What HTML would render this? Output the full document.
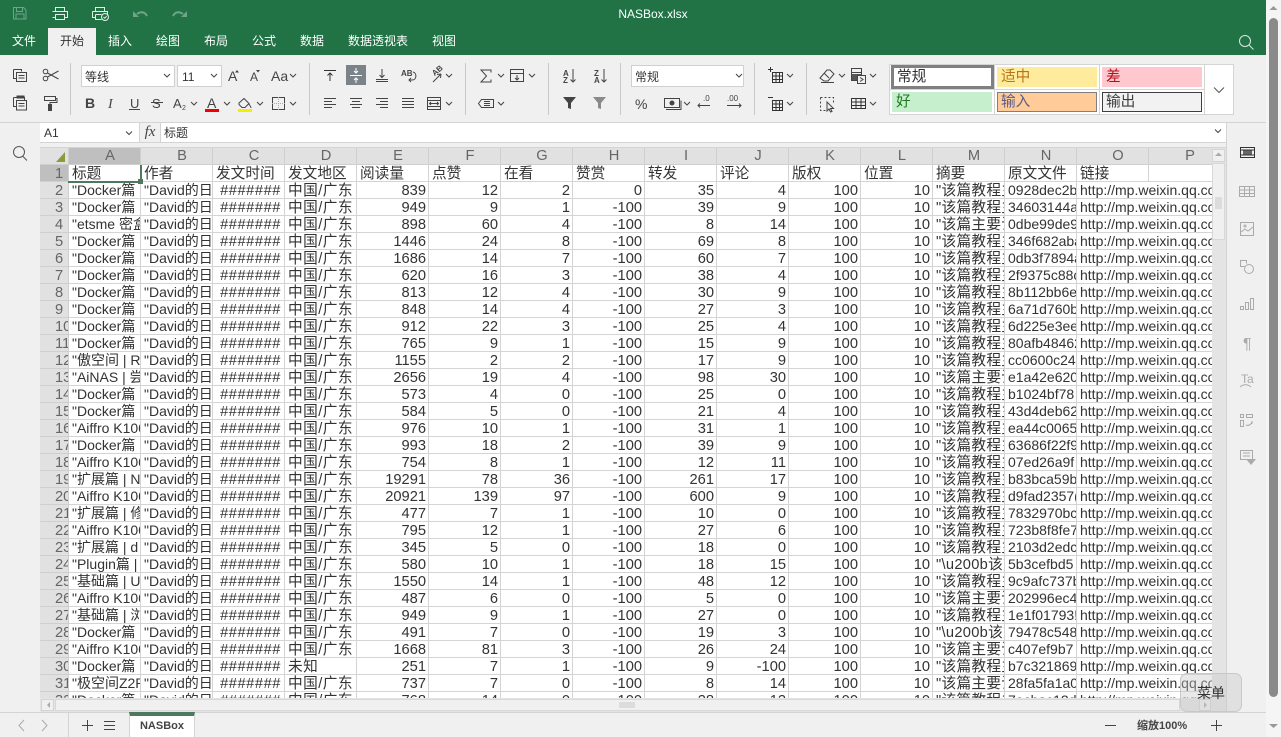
<!DOCTYPE html>
<html><head><meta charset="utf-8"><title>NASBox.xlsx</title>
<style>
html,body{margin:0;padding:0;width:1281px;height:737px;overflow:hidden;background:#f0f0f0;font-family:"Liberation Sans","WenQuanYi Zen Hei","Noto Sans CJK SC",sans-serif;color:#333}
.a{position:absolute;box-sizing:border-box;white-space:nowrap}
.m{color:#fff;font-size:12px;top:33px;line-height:16px}
#g{position:absolute;left:40px;top:148px;width:1172px;height:550px;overflow:hidden;background:#fff}
table{border-collapse:separate;border-spacing:0;table-layout:fixed;width:1181px}
td,th{box-sizing:border-box;height:17px;padding:2px 0 0 3px;border-right:1px solid #d4d4d4;border-bottom:1px solid #d4d4d4;overflow:hidden;white-space:nowrap;font-size:14.67px;line-height:14px;font-weight:400;color:#333;text-align:left;vertical-align:top}
thead th{background:#e1e1e1;color:#666;text-align:center;padding:0 0 0 11px;line-height:16px;border-color:#cfcfcf}
tbody th{background:#e1e1e1;color:#666;padding-left:15px;border-color:#cfcfcf}
td.r{text-align:right;padding:2px 2px 0 0}
td.h{text-align:right;padding:2px 3px 0 0;letter-spacing:.55px}
tbody tr:not(:first-child) td:nth-child(5){letter-spacing:.45px}
tbody tr:not(:first-child) td:nth-child(2),tbody tr:not(:first-child) td:nth-child(3),tbody tr:not(:first-child) td:nth-child(15),tbody tr:not(:first-child) td:nth-child(16){font-size:14px;padding-top:1px;padding-bottom:1px}
tbody tr:not(:first-child) td:nth-child(14){letter-spacing:.3px}
.s{position:absolute;box-sizing:border-box;font-size:14.67px;line-height:20px;padding-left:5px}
</style></head><body>
<div class="a" style="left:0;top:0;width:1266px;height:55px;background:#217346"></div>
<div class="a" style="left:1266px;top:0;width:15px;height:737px;background:#f5f5f5"></div>
<div class="a" style="left:1269px;top:18px;width:9px;height:679px;background:#8a8a8a;border-radius:5px"></div>
<div class="a" style="left:0;top:6px;width:1266px;text-align:center;color:#fff;font-size:12px;line-height:16px;padding-left:40px">NASBox.xlsx</div>
<div class="a" style="left:48px;top:28px;width:48px;height:27px;background:#f0f0f0"></div>
<div class="a m" style="left:12px">文件</div>
<div class="a m" style="left:60px;color:#333">开始</div>
<div class="a m" style="left:108px">插入</div>
<div class="a m" style="left:156px">绘图</div>
<div class="a m" style="left:204px">布局</div>
<div class="a m" style="left:252px">公式</div>
<div class="a m" style="left:300px">数据</div>
<div class="a m" style="left:348px">数据透视表</div>
<div class="a m" style="left:432px">视图</div>

<div class="a" style="left:0;top:122px;width:1266px;height:1px;background:#d4d4d4"></div>
<div class="a" style="left:70px;top:63px;width:1px;height:52px;background:#c8c8c8"></div>
<div class="a" style="left:309px;top:63px;width:1px;height:52px;background:#c8c8c8"></div>
<div class="a" style="left:465px;top:63px;width:1px;height:52px;background:#c8c8c8"></div>
<div class="a" style="left:548px;top:63px;width:1px;height:52px;background:#c8c8c8"></div>
<div class="a" style="left:620px;top:63px;width:1px;height:52px;background:#c8c8c8"></div>
<div class="a" style="left:754px;top:63px;width:1px;height:52px;background:#c8c8c8"></div>
<div class="a" style="left:806px;top:63px;width:1px;height:52px;background:#c8c8c8"></div>

<div class="a" style="left:81px;top:65px;width:94px;height:22px;background:#fff;border:1px solid #d0d0d0;font-size:12px;line-height:22px;padding-left:3px">等线</div>
<div class="a" style="left:177px;top:65px;width:45px;height:22px;background:#fff;border:1px solid #d0d0d0;font-size:12px;line-height:22px;padding-left:4px">11</div>
<div class="a" style="left:631px;top:65px;width:113px;height:22px;background:#fff;border:1px solid #d0d0d0;font-size:12px;line-height:22px;padding-left:3px">常规</div>
<div class="a" style="left:346px;top:65px;width:20px;height:20px;background:#7b8389"></div>

<div class="a" style="left:889px;top:64px;width:345px;height:51px;background:#fff;border:1px solid #d4d4d4"></div>
<div class="a" style="left:994px;top:65px;width:1px;height:49px;background:#d4d4d4"></div>
<div class="a" style="left:1099px;top:65px;width:1px;height:49px;background:#d4d4d4"></div>
<div class="a" style="left:1204px;top:65px;width:1px;height:49px;background:#d4d4d4"></div>
<div class="a" style="left:890px;top:89px;width:314px;height:1px;background:#d4d4d4"></div>
<div class="s" style="left:891px;top:65px;width:103px;height:24px;background:#fff;border:3px solid #808080;color:#333;line-height:19px;padding-left:3px">常规</div>
<div class="s" style="left:997px;top:67px;width:100px;height:20px;background:#ffeb9c;color:#b8741a;padding-left:4px">适中</div>
<div class="s" style="left:1102px;top:67px;width:100px;height:20px;background:#ffc7ce;color:#b3101a;padding-left:4px">差</div>
<div class="s" style="left:892px;top:92px;width:100px;height:20px;background:#c6efce;color:#1f7a1f;padding-left:4px">好</div>
<div class="s" style="left:997px;top:92px;width:100px;height:20px;background:#ffcc99;border:1px solid #7f7f7f;color:#5c5c8a;padding-left:3px;line-height:19px">输入</div>
<div class="s" style="left:1102px;top:92px;width:100px;height:20px;background:#f2f2f2;border:1px solid #3f3f3f;color:#3f3f3f;padding-left:3px;line-height:19px">输出</div>

<div class="a" style="left:40px;top:123px;width:1186px;height:20px;background:#fff;border-bottom:1px solid #d4d4d4"></div>
<div class="a" style="left:139px;top:123px;width:22px;height:19px;background:#f0f0f0;border-left:1px solid #d4d4d4;border-right:1px solid #d4d4d4;font:italic 15px/18px 'Liberation Serif',serif;text-align:center;color:#444">fx</div>
<div class="a" style="left:44px;top:124px;font-size:12px;line-height:18px">A1</div>
<div class="a" style="left:164px;top:124px;font-size:12px;line-height:18px">标题</div>
<div class="a" style="left:1226px;top:123px;width:1px;height:589px;background:#d4d4d4"></div>
<div class="a" style="left:40px;top:143px;width:1186px;height:5px;background:#f0f0f0;border-bottom:1px solid #d4d4d4"></div>

<div id="g"><table>
<colgroup><col style="width:29px"><col span="16" style="width:72px"></colgroup>
<thead><tr><th></th><th style="background:#bfbfbf">A</th><th>B</th><th>C</th><th>D</th><th>E</th><th>F</th><th>G</th><th>H</th><th>I</th><th>J</th><th>K</th><th>L</th><th>M</th><th>N</th><th>O</th><th>P</th></tr></thead>
<tbody>
<tr><th style="background:#bfbfbf">1</th><td>标题</td><td>作者</td><td>发文时间</td><td>发文地区</td><td>阅读量</td><td>点赞</td><td>在看</td><td>赞赏</td><td>转发</td><td>评论</td><td>版权</td><td>位置</td><td>摘要</td><td>原文文件</td><td>链接</td><td></td></tr>
<tr><th>2</th><td>"Docker篇 |</td><td>"David的日</td><td class="h">#######</td><td>中国/广东</td><td class="r">839</td><td class="r">12</td><td class="r">2</td><td class="r">0</td><td class="r">35</td><td class="r">4</td><td class="r">100</td><td class="r">10</td><td>"该篇教程主</td><td>0928dec2b</td><td colspan="2">http://mp.weixin.qq.com/s</td></tr>
<tr><th>3</th><td>"Docker篇 |</td><td>"David的日</td><td class="h">#######</td><td>中国/广东</td><td class="r">949</td><td class="r">9</td><td class="r">1</td><td class="r">-100</td><td class="r">39</td><td class="r">9</td><td class="r">100</td><td class="r">10</td><td>"该篇教程主</td><td>34603144a</td><td colspan="2">http://mp.weixin.qq.com/s</td></tr>
<tr><th>4</th><td>"etsme 密盒</td><td>"David的日</td><td class="h">#######</td><td>中国/广东</td><td class="r">898</td><td class="r">60</td><td class="r">4</td><td class="r">-100</td><td class="r">8</td><td class="r">14</td><td class="r">100</td><td class="r">10</td><td>"该篇主要讲</td><td>0dbe99de9</td><td colspan="2">http://mp.weixin.qq.com/s</td></tr>
<tr><th>5</th><td>"Docker篇 |</td><td>"David的日</td><td class="h">#######</td><td>中国/广东</td><td class="r">1446</td><td class="r">24</td><td class="r">8</td><td class="r">-100</td><td class="r">69</td><td class="r">8</td><td class="r">100</td><td class="r">10</td><td>"该篇教程主</td><td>346f682aba</td><td colspan="2">http://mp.weixin.qq.com/s</td></tr>
<tr><th>6</th><td>"Docker篇 |</td><td>"David的日</td><td class="h">#######</td><td>中国/广东</td><td class="r">1686</td><td class="r">14</td><td class="r">7</td><td class="r">-100</td><td class="r">60</td><td class="r">7</td><td class="r">100</td><td class="r">10</td><td>"该篇教程主</td><td>0db3f7894a</td><td colspan="2">http://mp.weixin.qq.com/s</td></tr>
<tr><th>7</th><td>"Docker篇 |</td><td>"David的日</td><td class="h">#######</td><td>中国/广东</td><td class="r">620</td><td class="r">16</td><td class="r">3</td><td class="r">-100</td><td class="r">38</td><td class="r">4</td><td class="r">100</td><td class="r">10</td><td>"该篇教程主</td><td>2f9375c88c</td><td colspan="2">http://mp.weixin.qq.com/s</td></tr>
<tr><th>8</th><td>"Docker篇 |</td><td>"David的日</td><td class="h">#######</td><td>中国/广东</td><td class="r">813</td><td class="r">12</td><td class="r">4</td><td class="r">-100</td><td class="r">30</td><td class="r">9</td><td class="r">100</td><td class="r">10</td><td>"该篇教程主</td><td>8b112bb6e</td><td colspan="2">http://mp.weixin.qq.com/s</td></tr>
<tr><th>9</th><td>"Docker篇 |</td><td>"David的日</td><td class="h">#######</td><td>中国/广东</td><td class="r">848</td><td class="r">14</td><td class="r">4</td><td class="r">-100</td><td class="r">27</td><td class="r">3</td><td class="r">100</td><td class="r">10</td><td>"该篇教程主</td><td>6a71d760b</td><td colspan="2">http://mp.weixin.qq.com/s</td></tr>
<tr><th>10</th><td>"Docker篇 |</td><td>"David的日</td><td class="h">#######</td><td>中国/广东</td><td class="r">912</td><td class="r">22</td><td class="r">3</td><td class="r">-100</td><td class="r">25</td><td class="r">4</td><td class="r">100</td><td class="r">10</td><td>"该篇教程主</td><td>6d225e3ee</td><td colspan="2">http://mp.weixin.qq.com/s</td></tr>
<tr><th>11</th><td>"Docker篇 |</td><td>"David的日</td><td class="h">#######</td><td>中国/广东</td><td class="r">765</td><td class="r">9</td><td class="r">1</td><td class="r">-100</td><td class="r">15</td><td class="r">9</td><td class="r">100</td><td class="r">10</td><td>"该篇教程主</td><td>80afb48462</td><td colspan="2">http://mp.weixin.qq.com/s</td></tr>
<tr><th>12</th><td>"傲空间 | R</td><td>"David的日</td><td class="h">#######</td><td>中国/广东</td><td class="r">1155</td><td class="r">2</td><td class="r">2</td><td class="r">-100</td><td class="r">17</td><td class="r">9</td><td class="r">100</td><td class="r">10</td><td>"该篇教程主</td><td>cc0600c24</td><td colspan="2">http://mp.weixin.qq.com/s</td></tr>
<tr><th>13</th><td>"AiNAS | 尝</td><td>"David的日</td><td class="h">#######</td><td>中国/广东</td><td class="r">2656</td><td class="r">19</td><td class="r">4</td><td class="r">-100</td><td class="r">98</td><td class="r">30</td><td class="r">100</td><td class="r">10</td><td>"该篇主要讲</td><td>e1a42e620</td><td colspan="2">http://mp.weixin.qq.com/s</td></tr>
<tr><th>14</th><td>"Docker篇 |</td><td>"David的日</td><td class="h">#######</td><td>中国/广东</td><td class="r">573</td><td class="r">4</td><td class="r">0</td><td class="r">-100</td><td class="r">25</td><td class="r">0</td><td class="r">100</td><td class="r">10</td><td>"该篇教程主</td><td>b1024bf78</td><td colspan="2">http://mp.weixin.qq.com/s</td></tr>
<tr><th>15</th><td>"Docker篇 |</td><td>"David的日</td><td class="h">#######</td><td>中国/广东</td><td class="r">584</td><td class="r">5</td><td class="r">0</td><td class="r">-100</td><td class="r">21</td><td class="r">4</td><td class="r">100</td><td class="r">10</td><td>"该篇教程主</td><td>43d4deb62</td><td colspan="2">http://mp.weixin.qq.com/s</td></tr>
<tr><th>16</th><td>"Aiffro K100</td><td>"David的日</td><td class="h">#######</td><td>中国/广东</td><td class="r">976</td><td class="r">10</td><td class="r">1</td><td class="r">-100</td><td class="r">31</td><td class="r">1</td><td class="r">100</td><td class="r">10</td><td>"该篇教程主</td><td>ea44c0065</td><td colspan="2">http://mp.weixin.qq.com/s</td></tr>
<tr><th>17</th><td>"Docker篇 |</td><td>"David的日</td><td class="h">#######</td><td>中国/广东</td><td class="r">993</td><td class="r">18</td><td class="r">2</td><td class="r">-100</td><td class="r">39</td><td class="r">9</td><td class="r">100</td><td class="r">10</td><td>"该篇教程主</td><td>63686f22f9</td><td colspan="2">http://mp.weixin.qq.com/s</td></tr>
<tr><th>18</th><td>"Aiffro K100</td><td>"David的日</td><td class="h">#######</td><td>中国/广东</td><td class="r">754</td><td class="r">8</td><td class="r">1</td><td class="r">-100</td><td class="r">12</td><td class="r">11</td><td class="r">100</td><td class="r">10</td><td>"该篇教程主</td><td>07ed26a9f</td><td colspan="2">http://mp.weixin.qq.com/s</td></tr>
<tr><th>19</th><td>"扩展篇 | N</td><td>"David的日</td><td class="h">#######</td><td>中国/广东</td><td class="r">19291</td><td class="r">78</td><td class="r">36</td><td class="r">-100</td><td class="r">261</td><td class="r">17</td><td class="r">100</td><td class="r">10</td><td>"该篇教程主</td><td>b83bca59b</td><td colspan="2">http://mp.weixin.qq.com/s</td></tr>
<tr><th>20</th><td>"Aiffro K100</td><td>"David的日</td><td class="h">#######</td><td>中国/广东</td><td class="r">20921</td><td class="r">139</td><td class="r">97</td><td class="r">-100</td><td class="r">600</td><td class="r">9</td><td class="r">100</td><td class="r">10</td><td>"该篇教程主</td><td>d9fad2357(</td><td colspan="2">http://mp.weixin.qq.com/s</td></tr>
<tr><th>21</th><td>"扩展篇 | 修</td><td>"David的日</td><td class="h">#######</td><td>中国/广东</td><td class="r">477</td><td class="r">7</td><td class="r">1</td><td class="r">-100</td><td class="r">10</td><td class="r">0</td><td class="r">100</td><td class="r">10</td><td>"该篇教程主</td><td>7832970bc</td><td colspan="2">http://mp.weixin.qq.com/s</td></tr>
<tr><th>22</th><td>"Aiffro K100</td><td>"David的日</td><td class="h">#######</td><td>中国/广东</td><td class="r">795</td><td class="r">12</td><td class="r">1</td><td class="r">-100</td><td class="r">27</td><td class="r">6</td><td class="r">100</td><td class="r">10</td><td>"该篇教程主</td><td>723b8f8fe7</td><td colspan="2">http://mp.weixin.qq.com/s</td></tr>
<tr><th>23</th><td>"扩展篇 | d</td><td>"David的日</td><td class="h">#######</td><td>中国/广东</td><td class="r">345</td><td class="r">5</td><td class="r">0</td><td class="r">-100</td><td class="r">18</td><td class="r">0</td><td class="r">100</td><td class="r">10</td><td>"该篇教程主</td><td>2103d2edc</td><td colspan="2">http://mp.weixin.qq.com/s</td></tr>
<tr><th>24</th><td>"Plugin篇 |</td><td>"David的日</td><td class="h">#######</td><td>中国/广东</td><td class="r">580</td><td class="r">10</td><td class="r">1</td><td class="r">-100</td><td class="r">18</td><td class="r">15</td><td class="r">100</td><td class="r">10</td><td>"\u200b该篇</td><td>5b3cefbd5</td><td colspan="2">http://mp.weixin.qq.com/s</td></tr>
<tr><th>25</th><td>"基础篇 | U</td><td>"David的日</td><td class="h">#######</td><td>中国/广东</td><td class="r">1550</td><td class="r">14</td><td class="r">1</td><td class="r">-100</td><td class="r">48</td><td class="r">12</td><td class="r">100</td><td class="r">10</td><td>"该篇教程主</td><td>9c9afc737b</td><td colspan="2">http://mp.weixin.qq.com/s</td></tr>
<tr><th>26</th><td>"Aiffro K100</td><td>"David的日</td><td class="h">#######</td><td>中国/广东</td><td class="r">487</td><td class="r">6</td><td class="r">0</td><td class="r">-100</td><td class="r">5</td><td class="r">0</td><td class="r">100</td><td class="r">10</td><td>"该篇主要讲</td><td>202996ec4</td><td colspan="2">http://mp.weixin.qq.com/s</td></tr>
<tr><th>27</th><td>"基础篇 | 浏</td><td>"David的日</td><td class="h">#######</td><td>中国/广东</td><td class="r">949</td><td class="r">9</td><td class="r">1</td><td class="r">-100</td><td class="r">27</td><td class="r">0</td><td class="r">100</td><td class="r">10</td><td>"该篇教程主</td><td>1e1f01793!</td><td colspan="2">http://mp.weixin.qq.com/s</td></tr>
<tr><th>28</th><td>"Docker篇 |</td><td>"David的日</td><td class="h">#######</td><td>中国/广东</td><td class="r">491</td><td class="r">7</td><td class="r">0</td><td class="r">-100</td><td class="r">19</td><td class="r">3</td><td class="r">100</td><td class="r">10</td><td>"\u200b该篇</td><td>79478c548</td><td colspan="2">http://mp.weixin.qq.com/s</td></tr>
<tr><th>29</th><td>"Aiffro K100</td><td>"David的日</td><td class="h">#######</td><td>中国/广东</td><td class="r">1668</td><td class="r">81</td><td class="r">3</td><td class="r">-100</td><td class="r">26</td><td class="r">24</td><td class="r">100</td><td class="r">10</td><td>"该篇主要讲</td><td>c407ef9b7</td><td colspan="2">http://mp.weixin.qq.com/s</td></tr>
<tr><th>30</th><td>"Docker篇 |</td><td>"David的日</td><td class="h">#######</td><td>未知</td><td class="r">251</td><td class="r">7</td><td class="r">1</td><td class="r">-100</td><td class="r">9</td><td class="r">-100</td><td class="r">100</td><td class="r">10</td><td>"该篇教程主</td><td>b7c321869</td><td colspan="2">http://mp.weixin.qq.com/s</td></tr>
<tr><th>31</th><td>"极空间Z2P</td><td>"David的日</td><td class="h">#######</td><td>中国/广东</td><td class="r">737</td><td class="r">7</td><td class="r">0</td><td class="r">-100</td><td class="r">8</td><td class="r">14</td><td class="r">100</td><td class="r">10</td><td>"该篇主要讲</td><td>28fa5fa1a0</td><td colspan="2">http://mp.weixin.qq.com/s</td></tr>
<tr><th>32</th><td>"Docker篇 |</td><td>"David的日</td><td class="h">#######</td><td>中国/广东</td><td class="r">768</td><td class="r">14</td><td class="r">0</td><td class="r">-100</td><td class="r">28</td><td class="r">12</td><td class="r">100</td><td class="r">10</td><td>"该篇教程主</td><td>7ecbac12d</td><td colspan="2">http://mp.weixin.qq.com/s</td></tr>
</tbody></table></div>

<div class="a" style="left:68px;top:181px;width:72px;height:2px;background:#4d7a5e"></div>
<div class="a" style="left:140px;top:165px;width:2px;height:15px;background:#4d7a5e"></div>
<div class="a" style="left:138px;top:179px;width:5px;height:5px;background:#4d7a5e"></div>

<div class="a" style="left:1212px;top:148px;width:14px;height:564px;background:#e4e4e4"></div>
<div class="a" style="left:1212px;top:149px;width:13px;height:13px;background:#f0f0f0;border:1px solid #d4d4d4"></div>
<div class="a" style="left:1212px;top:163px;width:13px;height:77px;background:#f0f0f0;border:1px solid #d8d8d8"></div>
<div class="a" style="left:40px;top:698px;width:1172px;height:14px;background:#e4e4e4"></div>
<div class="a" style="left:41px;top:699px;width:13px;height:12px;background:#f0f0f0;border:1px solid #d4d4d4"></div>
<div class="a" style="left:55px;top:699px;width:1125px;height:12px;background:#f0f0f0;border:1px solid #d8d8d8"></div>
<div class="a" style="left:1199px;top:699px;width:12px;height:12px;background:#f0f0f0;border:1px solid #d4d4d4"></div>
<div class="a" style="left:0;top:712px;width:1266px;height:25px;background:#f0f0f0;border-top:1px solid #d4d4d4"></div>
<div class="a" style="left:68px;top:712px;width:1px;height:25px;background:#d4d4d4"></div>
<div class="a" style="left:129px;top:712px;width:66px;height:25px;background:#fff;border-top:4px solid #4d7a5e;border-right:1px solid #d4d4d4;border-left:1px solid #d4d4d4;font-size:11px;font-weight:700;text-align:center;line-height:20px;color:#444">NASBox</div>
<div class="a" style="left:1137px;top:717px;font-size:11px;font-weight:700;line-height:18px;color:#444">缩放100%</div>

<svg class="a" style="left:0;top:0" width="1281" height="737" viewBox="0 0 1281 737" fill="none" stroke="#444" stroke-width="1">
<defs><path id="c" d="M-3-1.500 0 1.500 3-1.500"/></defs>
<g stroke="#6fa488"><path d="M13.500 7.500h10l2.500 2.500v9h-12.500zM16.500 7.500v4h6v-4M16 19v-5h8v5"/><path d="M137 14c4-3 8-2 10 2M173 16c2-4 6-5 10-2" stroke-width="2"/><path d="M133 11v6h6zM187 11v6h-6z" fill="#6fa488" stroke="none"/></g>
<g stroke="#e4efe9"><path d="M55.500 11.500v-4h9v4M52.500 11.500h15v6h-3M55.500 17.500h-3M55.500 14.500h9v5h-9z"/><path d="M95.500 11.500v-4h9v4M92.500 11.500h15v4M92.500 11.500v6h3M95.500 14.500h6M95.500 14.500v5h6"/><circle cx="105" cy="17" r="3.500"/><path d="M103.500 17l1.200 1.200 2-2"/></g>
<circle cx="1245" cy="41" r="5.500" stroke="#d8e8df"/><path d="M1249 45l4.500 4.500" stroke="#d8e8df"/>

<path d="M13.500 69.500h8v2M16.500 72.500h10v9h-10zM13.500 69.500v9h3M18.500 75.500h6M18.500 78h6"/>
<circle cx="45.500" cy="71.500" r="2.300"/><circle cx="45.500" cy="78.500" r="2.300"/><path d="M47.500 73l11 6M47.500 77l11-6"/>
<path d="M13.500 97.500h11v3M16.500 100.500h10v9.500h-10zM13.500 97.500v9h3M18.500 103.500h6M18.500 106h6"/><path d="M17 96h7v2h-7z" fill="#444"/>
<path d="M44.500 96.500h11v4h-11zM55.500 98.500h1.500v4h-7v2"/><path d="M48.500 104.500h3v6h-3z" fill="#444"/>

<use href="#c" x="167" y="75.500"/><use href="#c" x="214" y="75.500"/><use href="#c" x="293" y="75.500"/>
<use href="#c" x="194" y="103.500"/><use href="#c" x="227" y="103.500"/><use href="#c" x="260" y="103.500"/><use href="#c" x="293" y="103.500"/>
<use href="#c" x="449" y="75.500"/><use href="#c" x="449" y="103.500"/><use href="#c" x="501" y="75.500"/><use href="#c" x="532" y="75.500"/><use href="#c" x="501" y="103.500"/>
<use href="#c" x="739" y="75.500"/><use href="#c" x="687" y="103.500"/><use href="#c" x="790" y="75.500"/><use href="#c" x="790" y="103.500"/>
<use href="#c" x="842" y="75.500"/><use href="#c" x="873" y="75.500"/><use href="#c" x="873" y="103.500"/><use href="#c" x="129" y="133"/><use href="#c" x="1218" y="131"/>

<g fill="#444" stroke="none" font-family="Liberation Sans,sans-serif">
<text x="228" y="81" font-size="14">A</text><text x="250" y="81" font-size="12">A</text><text x="271" y="81" font-size="14">Aa</text>
<path d="M237 70l2 2.500h-4zM258 72.500l2-2.500h-4z"/>
<text x="85" y="108" font-size="14" font-weight="700">B</text>
<text x="108" y="108" font-size="14" font-style="italic" font-family="Liberation Serif,serif">I</text>
<text x="130" y="108" font-size="13">U</text><rect x="129" y="109" width="11" height="1"/>
<text x="152" y="108" font-size="13">S</text><rect x="151" y="102" width="12" height="1"/>
<text x="173" y="108" font-size="13">A</text><text x="182" y="110" font-size="7">2</text>
<text x="207" y="108" font-size="14">A</text><rect x="205" y="109" width="14" height="3" fill="#f00000"/>
<rect x="238" y="109" width="14" height="3" fill="#f4ee00"/>
<text x="401" y="76" font-size="8" font-weight="700">AB</text>
<text x="432" y="75" font-size="8" font-weight="700" transform="rotate(-40 435 72)">AB</text>
<text x="563" y="76" font-size="8" font-weight="700">A</text><text x="563" y="83" font-size="8" font-weight="700">Z</text>
<text x="594" y="76" font-size="8" font-weight="700">Z</text><text x="594" y="83" font-size="8" font-weight="700">A</text>
<path d="M563 97h13l-5 6v6l-3-1v-5z"/>
<path d="M593 97h13l-5 6v6l-3-1v-5z" fill="#8a8a8a"/>
<text x="635" y="109" font-size="14">%</text>
<text x="703" y="101" font-size="8">.0</text><text x="727" y="101" font-size="8">.00</text>
<text x="1243" y="349" font-size="16" fill="#aaa">¶</text>
<text x="1241" y="383" font-size="12" fill="#aaa">Ta</text>
</g>

<path d="M491 72.500v-2.500h-10l5.500 6-5.500 6h10v-2.500"/>
<path d="M239 103l5-4.500 5 5-4 4h-3l-3-3zM249 104c1 2 2 3 2 4"/>
<path d="M272.500 97.500h12v12h-12z"/><path d="M272 103.500h13M278.500 97v13" stroke="#aaa" stroke-dasharray="1 1"/>

<path d="M324 70.500h12M330 81v-8M327.500 75.500 330 73l2.500 2.500" stroke="#333"/>
<path d="M350 75.500h12M356 68v5M356 83v-5M354 71l2 2 2-2M354 80l2-2 2 2" stroke="#fff"/>
<path d="M376 81.500h12M382 69v8M379.500 75 382 77.500 384.500 75M376 79.500h12"/>
<path d="M413 72c4 1 4 8-1 8h-3M411 78l-2 2 2 2"/>
<path d="M433 82l8-8M441 74l-.5 4M441 74l-4 .5"/>
<path d="M324 98.500h12M324 101.500h8M324 104.500h12M324 107.500h8M350 98.500h12M352 101.500h8M350 104.500h12M352 107.500h8M376 98.500h12M380 101.500h8M376 104.500h12M380 107.500h8M402 98.500h12M402 101.500h12M402 104.500h12M402 107.500h12M427.500 97.500h13v12h-13zM427 100.500h14M427 106.500h14M430 103.500h8M431 102l-1.500 1.500 1.500 1.500M437 102l1.500 1.500-1.500 1.500"/>
<path d="M510.500 69.500h13v12h-13zM510 73.500h14M517 75v5M515 78l2 2 2-2"/>
<path d="M478.500 103.500l3-4h12v8h-12zM484 101.500h6M484 103.500h6M484 105.500h6"/>
<path d="M573 69v13M570.500 79.500 573 82l2.500-2.500M604 69v13M601.500 79.500 604 82l2.500-2.500"/>
<path d="M664.500 98.500h15v9h-15z"/><circle cx="672" cy="103" r="2" fill="#444"/><path d="M666 109.500h15v-9"/>
<path d="M710 105.500h-12M700 103.500l-2 2 2 2M727 105.500h14M739 103.500l2 2-2 2"/>
<path d="M772.500 72.500h10v10h-10zM772 76h11M772 79.500h11M776 72v11M779.500 72v11M768 69.500h5M770.500 67v5" stroke="#333"/>
<path d="M772.500 100.500h10v10h-10zM772 104h11M772 107.500h11M776 100v11M779.500 100v11M768 97.500h5" stroke="#333"/>
<path d="M820 78l7-8h3l4 4-6 7h-4zM824 73l5 5M821 82.500h13"/>
<path d="M851.500 68.500h10v12h-10zM851 72.500h10"/><path d="M852 74h9v6h-9z" fill="#555" stroke="none"/><path d="M857.500 75.500h8v8h-8z" fill="#f0f0f0"/><path d="M860 77.500l3 2-3 2"/>
<path d="M820.500 97.500h13v7M820.500 97.500v13h6" stroke-dasharray="2 2"/><path d="M827 102v9l2-2 1.500 3 1.500-.5-1.500-3h3z" fill="#f0f0f0"/>
<path d="M851.500 98.500h14v10h-14zM851 102h15M851 105.500h15M856 98v11M861 98v11" stroke="#333"/>
<path d="M1214 87.500l5 5 5-5" stroke="#555"/>

<path d="M13.500 152a5.500 5.500 0 1 0 11 0a5.500 5.500 0 1 0-11 0M22.500 156l4.500 4.500" stroke="#555"/>
<path d="M65 152v10H56z" fill="#8c9a3a" stroke="none"/>

<path d="M1240.500 147.500h14v10h-14z" stroke="#333"/><path d="M1243 150h9v5h-9z" fill="#666" stroke="none"/><path d="M1240 150h15M1240 155h15" stroke="#333"/>
<g stroke="#aaa"><path d="M1239.500 186.500h15v10h-15zM1239 190h16M1239 193.500h16M1244.500 186v11M1249.500 186v11"/>
<path d="M1240.500 222.500h13v13h-13zM1241 232l4-3 3 2 5-4"/><circle cx="1245" cy="226" r="1"/>
<path d="M1244.500 266.500h-4v-6h6v3"/><circle cx="1249" cy="269" r="4.500"/>
<path d="M1240.500 306.500h3v3h-3zM1245.500 302.500h3v7h-3zM1250.500 298.500h3v11h-3z"/>
<path d="M1240 387c3-3 8-3 11 0"/>
<path d="M1240.500 414.500h3v3h-3zM1246.500 414.500h6v3h-6zM1240.500 420.500h3v6h-3zM1246 425c2 1 5 0 6-3M1252 424v-3"/>
<path d="M1240.500 450.500h12v9h-12zM1243 453h7M1243 456h7"/></g>
<path d="M1246 459h10l-5 6z" fill="#aaa" stroke="none"/>

<path d="M1215 156l3.500-3.500 3.500 3.500z" fill="#aaa" stroke="none"/>
<path d="M1215 198h7M1215 200h7M1215 202h7M1215 204h7M1215 206h7M1215 208h7" stroke="#c8c8c8"/>
<path d="M620 702v6M622 702v6M624 702v6M626 702v6M628 702v6M630 702v6M632 702v6M634 702v6" stroke="#c8c8c8"/>
<path d="M1273.500 6l-4 4h8z" fill="#999" stroke="none"/><path d="M1269 724h9l-4.500 4z" fill="#999" stroke="none"/>
<path d="M50 702l-3 3 3 3z" fill="#aaa" stroke="none"/>
<path d="M1204 702l3 3-3 3z" fill="#aaa" stroke="none"/>
<path d="M24 720l-5 5.500 5 5.500M42 720l5 5.500-5 5.500" stroke="#aaa"/>
<path d="M82 725.500h11M87.500 720v11M104 721.500h11M104 725.500h11M104 729.500h11"/>
<path d="M1105 725.500h11M1211 725.500h11M1216.500 720v11"/>
</svg>

<div class="a" style="left:1180px;top:673px;width:62px;height:39px;background:rgba(200,200,200,.4);border:1px solid #c8c8c8;border-radius:7px;font-size:14px;line-height:18px;padding:10px 0 0 16px;color:#333">菜单</div>
</body></html>
